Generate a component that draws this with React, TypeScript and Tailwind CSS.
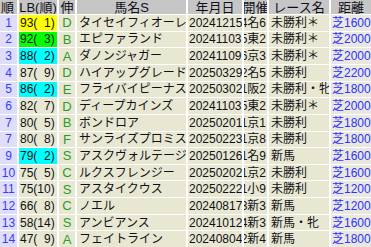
import React from "react"

type Row = {
  rank: string
  lb: string
  lbColor?: string
  nobi: string
  name: string
  date: string
  kaisai: string
  race: string
  dist: string
}

const rows: Row[] = [
  { rank: "1", lb: "93( 1)", lbColor: "bg-[#ffff00]", nobi: "D", name: "タイセイフィオーレ", date: "20241215", kaisai: "4名6", race: "未勝利＊", dist: "芝1600" },
  { rank: "2", lb: "92( 3)", lbColor: "bg-[#00ff00]", nobi: "B", name: "エピファランド", date: "20241103", kaisai: "5東2", race: "未勝利＊", dist: "芝2000" },
  { rank: "3", lb: "88( 2)", lbColor: "bg-[#00ffff]", nobi: "A", name: "ダノンジャガー", date: "20241109", kaisai: "6京3", race: "未勝利＊", dist: "芝2000" },
  { rank: "4", lb: "87( 9)", nobi: "D", name: "ハイアップグレード", date: "20250329", kaisai: "2名5", race: "未勝利", dist: "芝2200" },
  { rank: "5", lb: "86( 2)", lbColor: "bg-[#00ffff]", nobi: "E", name: "フライバイピーナス", date: "20250302", kaisai: "1阪2", race: "未勝利・牝", dist: "芝1800" },
  { rank: "6", lb: "82( 7)", nobi: "D", name: "ディープカインズ", date: "20241103", kaisai: "5東2", race: "未勝利＊", dist: "芝2000" },
  { rank: "7", lb: "80( 5)", nobi: "B", name: "ボンドロア", date: "20250201", kaisai: "1京1", race: "未勝利", dist: "芝1800" },
  { rank: "7", lb: "80( 8)", nobi: "F", name: "サンライズプロミス", date: "20250223", kaisai: "1京8", race: "未勝利", dist: "芝1800" },
  { rank: "9", lb: "79( 2)", lbColor: "bg-[#00ffff]", nobi: "S", name: "アスクヴォルテージ", date: "20250126", kaisai: "1名9", race: "新馬", dist: "芝1600" },
  { rank: "10", lb: "75( 5)", nobi: "C", name: "ルクスフレンジー", date: "20250202", kaisai: "1京2", race: "未勝利", dist: "芝1600" },
  { rank: "11", lb: "75(10)", nobi: "S", name: "アスタイクウス", date: "20250222", kaisai: "1小9", race: "未勝利", dist: "芝1200" },
  { rank: "12", lb: "66( 8)", nobi: "C", name: "ノエル", date: "20240817", kaisai: "3新3", race: "新馬", dist: "芝1200" },
  { rank: "13", lb: "58(14)", nobi: "S", name: "アンビアンス", date: "20241012", kaisai: "4新3", race: "新馬・牝", dist: "芝1600" },
  { rank: "14", lb: "47( 9)", nobi: "A", name: "フェイトライン", date: "20240804", kaisai: "2新4", race: "新馬", dist: "芝1800" },
]

const headers = ["順", "LB(順)", "伸", "馬名S", "年月日", "開催", "レース名", "距離"]

const cell = "flex items-center overflow-hidden whitespace-nowrap"

export default function App() {
  return (
    <div
      className="w-[371px] h-[247px] bg-white overflow-hidden text-[12px] leading-none text-[#101018]"
      style={{ fontFamily: '"Liberation Sans", "Noto Sans CJK JP", sans-serif' }}
    >
      <div className="grid h-[247px] grid-cols-[17px_38px_16px_109px_54px_23px_60px_40px] grid-rows-[14px_repeat(14,1fr)] gap-x-[2px] gap-y-px">
        {/* HEADER */}
        {headers.map((h, i) => (
          <div
            key={h}
            className={`${cell} bg-[#c6c6c6] text-[13px] ${i === 0 ? "justify-start pl-px" : "justify-center"}`}
          >
            {h}
          </div>
        ))}

        {/* ROWS */}
        {rows.map((r, i) => (
          <React.Fragment key={i}>
            <div className={`${cell} justify-center bg-[#dedefa] text-[#3a3aff]`}>{r.rank}</div>
            <div className={`${cell} pl-px ${r.lbColor ?? "bg-[#e8e8d2]"}`}>{r.lb.replace(/ /g, "\u2007")}</div>
            <div className={`${cell} justify-center bg-[#e8e8d2] text-[#2d9a2d] text-[13px]`}>{r.nobi}</div>
            <div className={`${cell} pl-[2px] bg-[#e8e8d2]`}>{r.name}</div>
            <div className={`${cell} pl-px bg-[#e8e8d2]`}>{r.date}</div>
            <div className={`${cell} justify-end pr-px bg-[#e8e8d2]`}>
              <span className="shrink-0">{r.kaisai}</span>
            </div>
            <div className={`${cell} pl-[2px] bg-[#e8e8d2]`}>{r.race}</div>
            <div className={`${cell} pl-px bg-[#e8e8de] text-[#3030ff]`}>{r.dist}</div>
          </React.Fragment>
        ))}
      </div>
    </div>
  )
}
